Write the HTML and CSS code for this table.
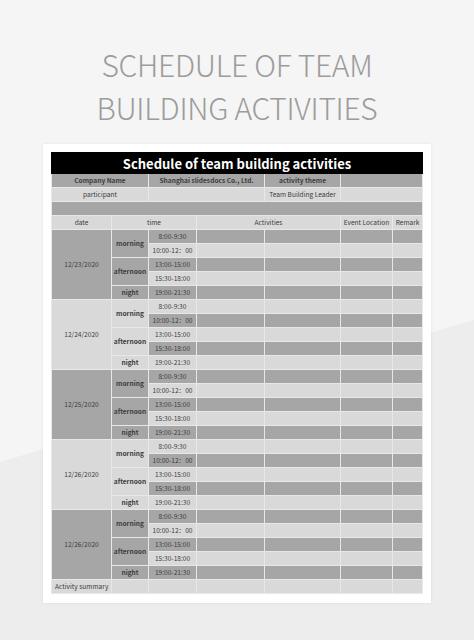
FILE: index.html
```html
<!DOCTYPE html>
<html lang="en">
<head>
<meta charset="utf-8">
<title>Schedule of team building activities</title>
<link rel="stylesheet" href="styles.css">
</head>
<body>
<h1 class="page-title">SCHEDULE OF TEAM<br>BUILDING ACTIVITIES</h1>
<div class="card">
<table class="sheet">
<colgroup>
<col class="c1"><col class="c2"><col class="c3"><col class="c4"><col class="c5"><col class="c6"><col class="c7">
</colgroup>
<tr class="title-row"><td colspan="7">Schedule of team building activities</td></tr>
<tr class="d strong"><td colspan="2">Company Name</td><td colspan="2">Shanghai slidesdocs Co., Ltd.</td><td>activity theme</td><td colspan="2"></td></tr>
<tr class="l"><td colspan="2">participant</td><td colspan="2"></td><td>Team Building Leader</td><td colspan="2"></td></tr>
<tr class="d"><td colspan="7"></td></tr>
<tr class="l"><td>date</td><td colspan="2">time</td><td colspan="2">Activities</td><td>Event Location</td><td>Remark</td></tr>

<tr class="d"><td rowspan="5" class="d">12/23/2020</td><td rowspan="2" class="d b">morning</td><td>8:00-9:30</td><td></td><td></td><td></td><td></td></tr>
<tr class="l"><td>10:00-12：00</td><td></td><td></td><td></td><td></td></tr>
<tr class="d"><td rowspan="2" class="d b">afternoon</td><td>13:00-15:00</td><td></td><td></td><td></td><td></td></tr>
<tr class="l"><td>15:30-18:00</td><td></td><td></td><td></td><td></td></tr>
<tr class="d"><td class="d b">night</td><td>19:00-21:30</td><td></td><td></td><td></td><td></td></tr>

<tr class="l"><td rowspan="5" class="l">12/24/2020</td><td rowspan="2" class="l b">morning</td><td>8:00-9:30</td><td></td><td></td><td></td><td></td></tr>
<tr class="d"><td>10:00-12：00</td><td></td><td></td><td></td><td></td></tr>
<tr class="l"><td rowspan="2" class="l b">afternoon</td><td>13:00-15:00</td><td></td><td></td><td></td><td></td></tr>
<tr class="d"><td>15:30-18:00</td><td></td><td></td><td></td><td></td></tr>
<tr class="l"><td class="l b">night</td><td>19:00-21:30</td><td></td><td></td><td></td><td></td></tr>

<tr class="d"><td rowspan="5" class="d">12/25/2020</td><td rowspan="2" class="d b">morning</td><td>8:00-9:30</td><td></td><td></td><td></td><td></td></tr>
<tr class="l"><td>10:00-12：00</td><td></td><td></td><td></td><td></td></tr>
<tr class="d"><td rowspan="2" class="d b">afternoon</td><td>13:00-15:00</td><td></td><td></td><td></td><td></td></tr>
<tr class="l"><td>15:30-18:00</td><td></td><td></td><td></td><td></td></tr>
<tr class="d"><td class="d b">night</td><td>19:00-21:30</td><td></td><td></td><td></td><td></td></tr>

<tr class="l"><td rowspan="5" class="l">12/26/2020</td><td rowspan="2" class="l b">morning</td><td>8:00-9:30</td><td></td><td></td><td></td><td></td></tr>
<tr class="d"><td>10:00-12：00</td><td></td><td></td><td></td><td></td></tr>
<tr class="l"><td rowspan="2" class="l b">afternoon</td><td>13:00-15:00</td><td></td><td></td><td></td><td></td></tr>
<tr class="d"><td>15:30-18:00</td><td></td><td></td><td></td><td></td></tr>
<tr class="l"><td class="l b">night</td><td>19:00-21:30</td><td></td><td></td><td></td><td></td></tr>

<tr class="d"><td rowspan="5" class="d">12/26/2020</td><td rowspan="2" class="d b">morning</td><td>8:00-9:30</td><td></td><td></td><td></td><td></td></tr>
<tr class="l"><td>10:00-12：00</td><td></td><td></td><td></td><td></td></tr>
<tr class="d"><td rowspan="2" class="d b">afternoon</td><td>13:00-15:00</td><td></td><td></td><td></td><td></td></tr>
<tr class="l"><td>15:30-18:00</td><td></td><td></td><td></td><td></td></tr>
<tr class="d"><td class="d b">night</td><td>19:00-21:30</td><td></td><td></td><td></td><td></td></tr>

<tr class="l"><td class="left">Activity summary</td><td></td><td></td><td></td><td></td><td></td><td></td></tr>
</table>
</div>
</body>
</html>
```
FILE: styles.css
```css
html, body {
  margin: 0;
  padding: 0;
}
body {
  width: 474px;
  height: 640px;
  overflow: hidden;
  background: linear-gradient(163.3deg, #f5f5f5 0, #f5f5f5 442px, #ededed 443px, #ededed 100%);
  font-family: "Noto Sans CJK SC", "Noto Sans", sans-serif;
}
.page-title {
  margin: 0;
  padding-top: 43px;
  height: 85px;
  font-family: "Noto Sans CJK SC", "Noto Sans", sans-serif;
  font-weight: 300;
  font-size: 30px;
  letter-spacing: -0.3px;
  line-height: 43px;
  color: #9c9c9c;
  text-align: center;
}
.card {
  margin: 16px 0 0 43px;
  width: 388px;
  box-sizing: border-box;
  padding: 8px 9px 9px 8px;
  background: #ffffff;
  box-shadow: 0 0 3px rgba(0, 0, 0, 0.08);
}
.sheet {
  width: 371px;
  table-layout: fixed;
  border-collapse: collapse;
  font-size: 6.6px;
  color: #3c3c3c;
}
.c1 { width: 60px; }
.c2 { width: 37px; }
.c3 { width: 48px; }
.c4 { width: 68px; }
.c5 { width: 76px; }
.c6 { width: 52px; }
.c7 { width: 30px; }
.sheet tr { height: 14px; }
.sheet td {
  padding: 0;
  border: 1px solid #e8e8e8;
  text-align: center;
  line-height: 1;
  white-space: nowrap;
  overflow: hidden;
}
.sheet tr.d td { background: #a6a6a6; }
.sheet tr.l td { background: #d9d9d9; }
.sheet tr td.d { background: #a6a6a6; }
.sheet tr td.l { background: #d9d9d9; }
.sheet .title-row { height: 21px; }
.sheet .title-row td {
  background: #000000;
  color: #ffffff;
  font-size: 13px;
  font-weight: 700;
  border-color: #000000;
}
.sheet .strong td { font-weight: 600; }
.sheet td.b { font-weight: 600; }
.sheet td.left {
  text-align: left;
  padding-left: 3px;
}
```
